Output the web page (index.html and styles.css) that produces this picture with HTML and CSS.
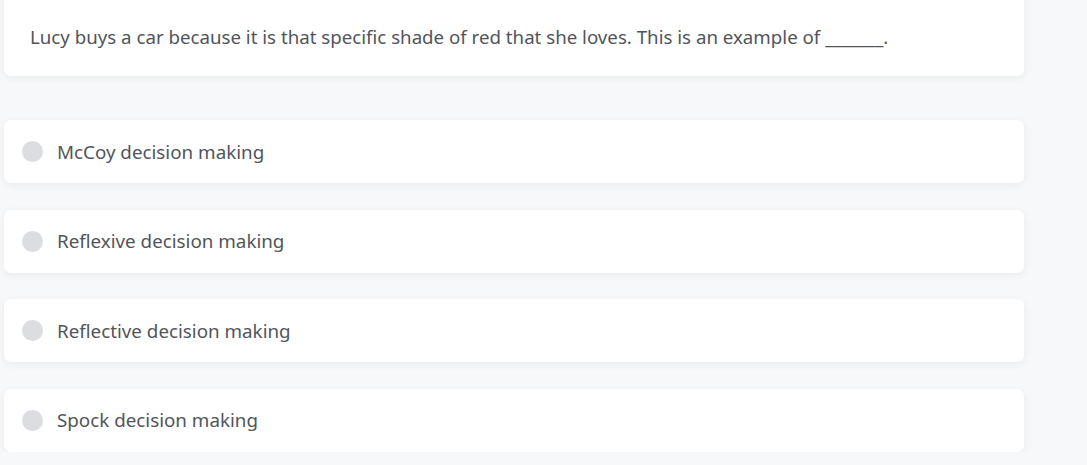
FILE: index.html
```html
<!DOCTYPE html>
<html>
<head>
<meta charset="utf-8">
<link rel="stylesheet" href="styles.css">
</head>
<body>
<div class="quiz">
  <div class="question card">
    <p>Lucy buys a car because it is that specific shade of red that she loves. This is an example of _______.</p>
  </div>
  <div class="options">
    <label class="card option"><span class="radio"></span><span class="label">McCoy decision making</span></label>
    <label class="card option"><span class="radio"></span><span class="label">Reflexive decision making</span></label>
    <label class="card option"><span class="radio"></span><span class="label">Reflective decision making</span></label>
    <label class="card option"><span class="radio"></span><span class="label">Spock decision making</span></label>
  </div>
</div>
</body>
</html>
```
FILE: styles.css
```css
html, body {
  margin: 0;
  padding: 0;
  background: #f7f8fa;
  font-family: "Noto Sans", "Open Sans", sans-serif;
  color: #51555b;
}
.quiz {
  width: 1020px;
  margin-left: 4px;
  margin-top: -11px;
  display: flex;
  flex-direction: column;
  gap: 44px;
}
.card {
  background: #fff;
  border-radius: 7px;
  box-shadow: 0 2px 8px rgba(0, 0, 0, 0.06);
}
.question {
  height: 87px;
  display: flex;
  align-items: center;
  padding-left: 26px;
  box-sizing: border-box;
  padding-top: 7px;
}
.question p {
  margin: 0;
  font-size: 18.7px;
}
.options {
  display: flex;
  flex-direction: column;
  gap: 26.6px;
}
.option {
  height: 63px;
  display: flex;
  align-items: center;
  padding-left: 18px;
  box-sizing: border-box;
}
.radio {
  width: 21px;
  height: 21px;
  border-radius: 50%;
  background: #dcdde0;
  flex: none;
}
.label {
  margin-left: 14px;
  font-size: 18.8px;
}
```
